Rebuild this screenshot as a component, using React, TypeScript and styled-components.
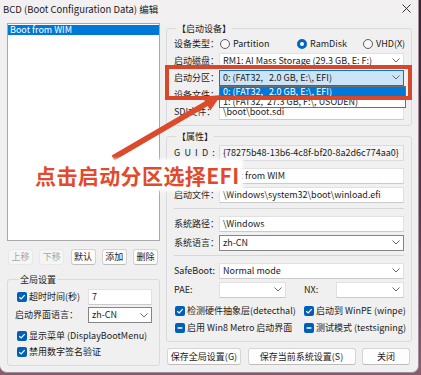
import React from 'react';
import styled, { createGlobalStyle, css } from 'styled-components';

const FONT = '"Noto Sans CJK SC", "Noto Sans", sans-serif';

const Global = createGlobalStyle`
  html, body { margin: 0; padding: 0; }
  body {
    width: 421px; height: 375px; overflow: hidden;
    background: #4a2a44;
    font-family: ${FONT};
    font-size: 9px;
    color: #1b1b1b;
  }
  * { box-sizing: border-box; }
`;

const Desktop = styled.div`
  width: 421px;
  height: 375px;
  background: linear-gradient(180deg, #3a2233 0%, #5e3350 55%, #8a5a6c 100%);
`;

const Window = styled.div`
  position: relative;
  width: 419px;
  height: 373px;
  background: #f0f0f0;
  border-right: 1px solid #a08f9a;
  border-bottom: 1px solid #a08f9a;
  border-radius: 0 0 7px 7px;
  overflow: hidden;
  display: flex;
  flex-direction: column;
`;

const TitleBar = styled.div`
  height: 22px;
  flex: none;
  display: flex;
  align-items: flex-start;
  justify-content: space-between;
  padding: 3px 7px 0 3px;
  background: #f3f0f2;
`;

const Title = styled.div`
  font-size: 9.5px;
  line-height: 12px;
  color: #1a1a1a;
  white-space: nowrap;
`;

const CloseSvg = styled.svg`
  margin-top: 1px;
`;

const Body = styled.div`
  display: flex;
  gap: 6px;
  padding: 1px 6px 0 7px;
`;

const LeftCol = styled.div`
  width: 154px;
  display: flex;
  flex-direction: column;
`;

const RightCol = styled.div`
  width: 246px;
  display: flex;
  flex-direction: column;
`;

const ListBox = styled.div`
  height: 218px;
  background: #fff;
  border: 1px solid #a9a9a9;
  padding: 1px 0;
`;

const ListItem = styled.div<{ $selected?: boolean }>`
  height: 10px;
  line-height: 10px;
  padding-left: 2px;
  font-size: 9px;
  white-space: nowrap;
  ${(p) =>
    p.$selected &&
    css`
      background: #0078d7;
      color: #fff;
    `}
`;

const ListButtons = styled.div`
  margin-top: 8px;
  display: flex;
  justify-content: space-between;
  padding: 0 2px 0 1px;
`;

const SmallButton = styled.button`
  width: 25px;
  height: 16px;
  padding: 0;
  font-family: ${FONT};
  font-size: 9px;
  line-height: 14px;
  color: #1b1b1b;
  background: #fdfdfd;
  border: 1px solid #d3d3d3;
  border-bottom-color: #bcbcbc;
  border-radius: 3px;
  &:disabled {
    color: #a6a6a6;
    background: #f5f5f5;
    border-color: #e8e8e8;
  }
`;

const Group = styled.fieldset<{ $mt?: number }>`
  margin: ${(p) => p.$mt ?? 0}px 0 0 0;
  padding: 0 7px 5px 7px;
  border: 1px solid #dadada;
  border-radius: 3px;
  min-width: 0;
`;

const Legend = styled.legend<{ $ml?: number }>`
  padding: 0 1px;
  margin-left: ${(p) => p.$ml ?? 2}px;
  font-size: 9px;
  line-height: 11px;
  white-space: nowrap;
`;

const GlobalGrid = styled.div`
  margin-top: 4px;
  display: grid;
  grid-template-columns: 73px 64px;
  grid-auto-rows: 16px;
  row-gap: 2px;
  align-items: center;
`;

const Label = styled.span<{ $ls?: number; $pl?: number }>`
  white-space: nowrap;
  font-size: 9px;
  line-height: 12px;
  letter-spacing: ${(p) => p.$ls ?? 0}px;
  padding-left: ${(p) => p.$pl ?? 0}px;
`;

const CheckLabel = styled.label<{ $pl?: number }>`
  display: flex;
  align-items: center;
  gap: 2px;
  padding-left: ${(p) => p.$pl ?? 2}px;
  white-space: nowrap;
  font-size: 9px;
  line-height: 12px;
`;

const CheckRow = styled.div<{ $mt?: number }>`
  height: 16px;
  margin-top: ${(p) => p.$mt ?? 0}px;
  display: flex;
  align-items: center;
`;

const CheckBoxBox = styled.span`
  width: 10px;
  height: 10px;
  flex: none;
  border-radius: 2px;
  background: #005fb8;
  display: inline-flex;
  align-items: center;
  justify-content: center;
`;

const CheckBox = ({ mixed }: { mixed?: boolean }) => (
  <CheckBoxBox>
    <svg width="10" height="10" viewBox="0 0 10 10">
      {mixed ? (
        <line x1="2.6" y1="5" x2="7.4" y2="5" stroke="#fff" strokeWidth="1.3" />
      ) : (
        <polyline points="2.3,5.2 4.2,7 7.7,3.1" fill="none" stroke="#fff" strokeWidth="1.2" />
      )}
    </svg>
  </CheckBoxBox>
);

const FormRow = styled.div<{ $h?: number; $mt?: number; $cols?: string }>`
  height: ${(p) => p.$h ?? 17}px;
  margin-top: ${(p) => p.$mt ?? 0}px;
  display: grid;
  grid-template-columns: ${(p) => p.$cols ?? '45px 1fr'};
  align-items: center;
`;

const RadioGroup = styled.div`
  display: grid;
  grid-template-columns: 77px 66px 1fr;
  align-items: center;
  padding-left: 1px;
`;

const RadioOption = styled.label`
  display: flex;
  align-items: center;
  gap: 3px;
  white-space: nowrap;
  font-size: 9px;
  line-height: 12px;
`;

const Radio = styled.span<{ $on?: boolean }>`
  width: 10px;
  height: 10px;
  flex: none;
  border-radius: 50%;
  background: #f7f7f7;
  border: 1px solid #5d5d5d;
  ${(p) =>
    p.$on &&
    css`
      border: 3px solid #0067c0;
      background: #fff;
    `}
`;

type FieldVariant = 'edit' | 'readonly' | 'combo' | 'focus';

const Field = styled.div<{ $variant?: FieldVariant }>`
  position: relative;
  height: 16px;
  display: flex;
  align-items: center;
  justify-content: space-between;
  padding: 0 3px 0 3px;
  background: #fff;
  border: 1px solid #e1e1e1;
  border-bottom-color: #cacaca;
  font-size: 9px;
  line-height: 12px;
  white-space: nowrap;
  ${(p) =>
    p.$variant === 'readonly' &&
    css`
      background: #f4f4f4;
      border-color: #dcdcdc;
    `}
  ${(p) =>
    p.$variant === 'combo' &&
    css`
      border-color: #858585;
    `}
  ${(p) =>
    p.$variant === 'focus' &&
    css`
      background: #cce4f7;
      border-color: #0078d7;
    `}
`;

const ChevronSvg = styled.svg`
  flex: none;
`;

const Chevron = () => (
  <ChevronSvg width="8" height="5" viewBox="0 0 8 5">
    <polyline points="0.5,0.5 4,4 7.5,0.5" fill="none" stroke="#6a6a6a" strokeWidth="1" />
  </ChevronSvg>
);

const Dropdown = styled.div`
  position: absolute;
  top: 15px;
  left: -1px;
  right: -3px;
  background: #fff;
  border: 1px solid #6f6f6f;
  z-index: 2;
`;

const DropItem = styled.div<{ $active?: boolean }>`
  height: 10px;
  line-height: 10px;
  padding-left: 3px;
  font-size: 9px;
  white-space: nowrap;
  ${(p) =>
    p.$active &&
    css`
      background: #0078d7;
      color: #fff;
    `}
`;

const Separator = styled.div<{ $mt?: number; $mb?: number }>`
  height: 1px;
  background: #d6d6d6;
  margin: ${(p) => p.$mt ?? 4}px 0 ${(p) => p.$mb ?? 5}px 0;
`;

const CheckGrid = styled.div<{ $mt?: number }>`
  margin-top: ${(p) => p.$mt ?? 0}px;
  display: grid;
  grid-template-columns: 130px 1fr;
  grid-auto-rows: 17px;
  align-items: center;
`;

const Footer = styled.div`
  margin-top: 6px;
  display: flex;
  justify-content: space-between;
  padding: 0 2px 0 1px;
`;

const DlgButton = styled.button<{ $w: number }>`
  width: ${(p) => p.$w}px;
  height: 17px;
  padding: 0;
  font-family: ${FONT};
  font-size: 9px;
  line-height: 14px;
  color: #1b1b1b;
  background: #fdfdfd;
  border: 1px solid #d5d5d5;
  border-bottom-color: #bdbdbd;
  border-radius: 3px;
`;

/* ---------- annotation overlays ---------- */

const Highlight = styled.div`
  position: absolute;
  left: 165px;
  top: 65px;
  width: 247px;
  height: 35px;
  border: 4px solid #d9472b;
  z-index: 5;
  pointer-events: none;
`;

const ArrowSvg = styled.svg`
  position: absolute;
  left: 0;
  top: 0;
  z-index: 6;
  pointer-events: none;
`;

const Callout = styled.div`
  position: absolute;
  left: 30px;
  top: 160px;
  padding: 3px 2px 2px 5px;
  background: #ffffff;
  box-shadow: 0 0 3px 1px rgba(255, 255, 255, 0.9);
  color: #e24a2b;
  font-family: ${FONT};
  font-weight: 700;
  font-size: 21px;
  line-height: 25px;
  letter-spacing: 0.4px;
  white-space: nowrap;
  z-index: 7;
`;

export default function App() {
  // arrow geometry
  const tip = [221, 95];
  const start = [113, 158];
  const dx = tip[0] - start[0];
  const dy = tip[1] - start[1];
  const len = Math.hypot(dx, dy);
  const ux = dx / len;
  const uy = dy / len;
  const nx = -uy;
  const ny = ux;
  const headL = 17;
  const headW = 8;
  const bx = tip[0] - headL * ux;
  const by = tip[1] - headL * uy;
  const head = `${tip[0]},${tip[1]} ${bx + headW * nx},${by + headW * ny} ${bx - headW * nx},${by - headW * ny}`;

  return (
    <>
      <Global />
      <Desktop>
        <Window>
          <TitleBar>
            <Title>BCD (Boot Configuration Data) 编辑</Title>
            <CloseSvg width="9" height="9" viewBox="0 0 9 9">
              <path d="M0.5 0.5 L8.5 8.5 M8.5 0.5 L0.5 8.5" stroke="#222" strokeWidth="0.9" />
            </CloseSvg>
          </TitleBar>
          <Body>
            <LeftCol>
              <ListBox>
                <ListItem $selected>Boot from WIM</ListItem>
              </ListBox>
              <ListButtons>
                <SmallButton disabled>上移</SmallButton>
                <SmallButton disabled>下移</SmallButton>
                <SmallButton>默认</SmallButton>
                <SmallButton>添加</SmallButton>
                <SmallButton>删除</SmallButton>
              </ListButtons>
              <Group $mt={9}>
                <Legend $ml={4}>全局设置</Legend>
                <GlobalGrid>
                  <CheckLabel>
                    <CheckBox />
                    超时时间(秒)
                  </CheckLabel>
                  <Field>7</Field>
                  <Label>启动界面语言：</Label>
                  <Field $variant="combo">
                    zh-CN
                    <Chevron />
                  </Field>
                </GlobalGrid>
                <CheckRow $mt={5}>
                  <CheckLabel>
                    <CheckBox />
                    显示菜单 (DisplayBootMenu)
                  </CheckLabel>
                </CheckRow>
                <CheckRow>
                  <CheckLabel>
                    <CheckBox />
                    禁用数字签名验证
                  </CheckLabel>
                </CheckRow>
              </Group>
            </LeftCol>

            <RightCol>
              <Group>
                <Legend>【启动设备】</Legend>
                <FormRow $mt={1}>
                  <Label>设备类型：</Label>
                  <RadioGroup>
                    <RadioOption>
                      <Radio />
                      Partition
                    </RadioOption>
                    <RadioOption>
                      <Radio $on />
                      RamDisk
                    </RadioOption>
                    <RadioOption>
                      <Radio />
                      VHD(X)
                    </RadioOption>
                  </RadioGroup>
                </FormRow>
                <FormRow>
                  <Label>启动磁盘：</Label>
                  <Field>
                    RM1: AI Mass Storage (29.3 GB, E: F:)
                    <Chevron />
                  </Field>
                </FormRow>
                <FormRow>
                  <Label>启动分区：</Label>
                  <Field $variant="focus">
                    0: (FAT32,&nbsp;&nbsp; 2.0 GB, E:\, EFI)
                    <Chevron />
                    <Dropdown>
                      <DropItem $active>0: (FAT32,&nbsp;&nbsp; 2.0 GB, E:\, EFI)</DropItem>
                      <DropItem>1: (FAT32,&nbsp;&nbsp;27.3 GB, F:\, USODEN)</DropItem>
                    </Dropdown>
                  </Field>
                </FormRow>
                <FormRow>
                  <Label>设备文件：</Label>
                  <Field>\boot\boot.wim</Field>
                </FormRow>
                <FormRow>
                  <Label>SDI文件：</Label>
                  <Field>\boot\boot.sdi</Field>
                </FormRow>
              </Group>

              <Group $mt={5}>
                <Legend>【属性】</Legend>
                <FormRow $h={19} $mt={1}>
                  <Label $ls={4.2}>GUID:</Label>
                  <Field $variant="readonly">{'{78275b48-13b6-4c8f-bf20-8a2d6c774aa0}'}</Field>
                </FormRow>
                <FormRow $h={19} $mt={4}>
                  <Label>描述：</Label>
                  <Field>Boot from WIM</Field>
                </FormRow>
                <FormRow $h={19}>
                  <Label>启动文件：</Label>
                  <Field>\Windows\system32\boot\winload.efi</Field>
                </FormRow>
                <Separator $mt={4} $mb={5} />
                <FormRow $h={19}>
                  <Label>系统路径：</Label>
                  <Field>\Windows</Field>
                </FormRow>
                <FormRow $h={19}>
                  <Label>系统语言：</Label>
                  <Field $variant="combo">
                    zh-CN
                    <Chevron />
                  </Field>
                </FormRow>
                <Separator $mt={3} $mb={5} />
                <FormRow $h={19}>
                  <Label>SafeBoot:</Label>
                  <Field>
                    Normal mode
                    <Chevron />
                  </Field>
                </FormRow>
                <FormRow $h={19} $cols="45px 67px 50px 1fr">
                  <Label>PAE:</Label>
                  <Field>
                    <span />
                    <Chevron />
                  </Field>
                  <Label $pl={18}>NX:</Label>
                  <Field>
                    <span />
                    <Chevron />
                  </Field>
                </FormRow>
                <CheckGrid $mt={3}>
                  <CheckLabel $pl={1}>
                    <CheckBox />
                    检测硬件抽象层(detecthal)
                  </CheckLabel>
                  <CheckLabel $pl={0}>
                    <CheckBox />
                    启动到 WinPE (winpe)
                  </CheckLabel>
                  <CheckLabel $pl={1}>
                    <CheckBox mixed />
                    启用 Win8 Metro 启动界面
                  </CheckLabel>
                  <CheckLabel $pl={0}>
                    <CheckBox mixed />
                    测试模式 (testsigning)
                  </CheckLabel>
                </CheckGrid>
              </Group>

              <Footer>
                <DlgButton $w={74}>保存全局设置(G)</DlgButton>
                <DlgButton $w={108}>保存当前系统设置(S)</DlgButton>
                <DlgButton $w={48}>关闭</DlgButton>
              </Footer>
            </RightCol>
          </Body>

          <Highlight />
          <ArrowSvg width="421" height="375" viewBox="0 0 421 375">
            <line x1={start[0]} y1={start[1]} x2={bx + ux} y2={by + uy} stroke="#dc4a2c" strokeWidth="5.5" />
            <polygon points={head} fill="#dc4a2c" />
          </ArrowSvg>
          <Callout>点击启动分区选择EFI</Callout>
        </Window>
      </Desktop>
    </>
  );
}
